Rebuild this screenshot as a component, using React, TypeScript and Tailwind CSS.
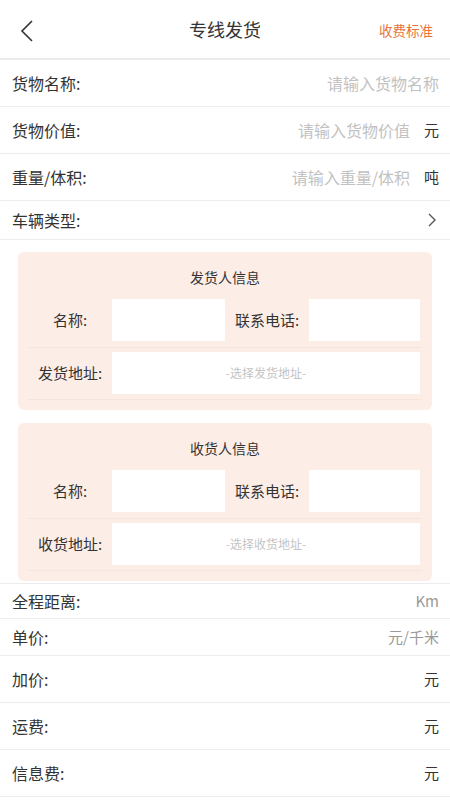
import { ReactNode } from 'react';

const font = { fontFamily: '"Noto Sans CJK SC", "Noto Sans", sans-serif' };

function Row({ label, right, unit, h = 'h-[47px]' }: { label: string; right?: ReactNode; unit?: string; h?: string }) {
  return (
    <div className={`flex ${h} items-center border-b border-[#ececec] pl-3 pr-[11px]`}>
      <span className="text-[16px] text-[#333]">{label}</span>
      <div className="ml-auto flex items-center">
        {right}
        {unit && <span className="ml-[14px] text-[15px] text-[#333]">{unit}</span>}
      </div>
    </div>
  );
}

function PartyCard({ title, addrLabel, addrHint }: { title: string; addrLabel: string; addrHint: string }) {
  return (
    <div className="rounded-[6px] bg-[#fdede7] pb-[10px]">
      <div className="pb-[12px] pt-[15px] text-center text-[14px] leading-[20px] text-[#333]">{title}</div>
      <div className="mx-[10px] grid grid-cols-[84px_113px_84px_111px] items-center border-b border-[#f7e4dd] pb-[6px]">
        <span className="text-center text-[15px] text-[#333]">名称:</span>
        <div className="h-[42px] bg-white" />
        <span className="text-center text-[15px] text-[#333]">联系电话:</span>
        <div className="h-[42px] bg-white" />
      </div>
      <div className="mx-[10px] grid grid-cols-[84px_308px] items-center border-b border-[#f7e4dd] pb-[5px] pt-[4px]">
        <span className="text-center text-[15px] text-[#333]">{addrLabel}</span>
        <div className="flex h-[42px] items-center justify-center bg-white text-[12px] text-[#c4c4c4]">{addrHint}</div>
      </div>
    </div>
  );
}

export default function App() {
  return (
    <div className="min-h-[800px] w-[450px] bg-white" style={font}>
      <header className="relative flex h-[60px] items-center justify-center border-b-2 border-[#ebebeb]">
        <svg className="absolute left-[18px] top-[19px]" width="18" height="24" viewBox="0 0 18 24">
          <polyline points="14,2 4,12 14,22" fill="none" stroke="#333" strokeWidth="1.6" />
        </svg>
        <span className="text-[18px] text-[#333]">专线发货</span>
        <span className="absolute right-[17px] top-[20px] text-[13.5px] text-[#e8743b]">收费标准</span>
      </header>

      <Row label="货物名称:" right={<span className="text-[16px] text-[#c2c2c2]">请输入货物名称</span>} />
      <Row label="货物价值:" right={<span className="text-[16px] text-[#c2c2c2]">请输入货物价值</span>} unit="元" />
      <Row label="重量/体积:" right={<span className="text-[16px] text-[#c2c2c2]">请输入重量/体积</span>} unit="吨" />
      <Row
        label="车辆类型:"
        h="h-[39px]"
        right={
          <svg width="10" height="16" viewBox="0 0 10 16" className="mr-[2px]">
            <polyline points="2,2 8,8 2,14" fill="none" stroke="#555" strokeWidth="1.4" />
          </svg>
        }
      />

      <div className="flex flex-col gap-[13px] border-b border-[#ececec] px-[18px] pb-[2px] pt-3">
        <PartyCard title="发货人信息" addrLabel="发货地址:" addrHint="-选择发货地址-" />
        <PartyCard title="收货人信息" addrLabel="收货地址:" addrHint="-选择收货地址-" />
      </div>

      <Row label="全程距离:" h="h-[35px]" right={<span className="text-[15px] text-[#999]">Km</span>} />
      <Row label="单价:" h="h-[37px]" right={<span className="text-[15px] text-[#999]">元/千米</span>} />
      <Row label="加价:" right={<span className="text-[15px] text-[#333]">元</span>} />
      <Row label="运费:" right={<span className="text-[15px] text-[#333]">元</span>} />
      <Row label="信息费:" right={<span className="text-[15px] text-[#333]">元</span>} />
    </div>
  );
}
